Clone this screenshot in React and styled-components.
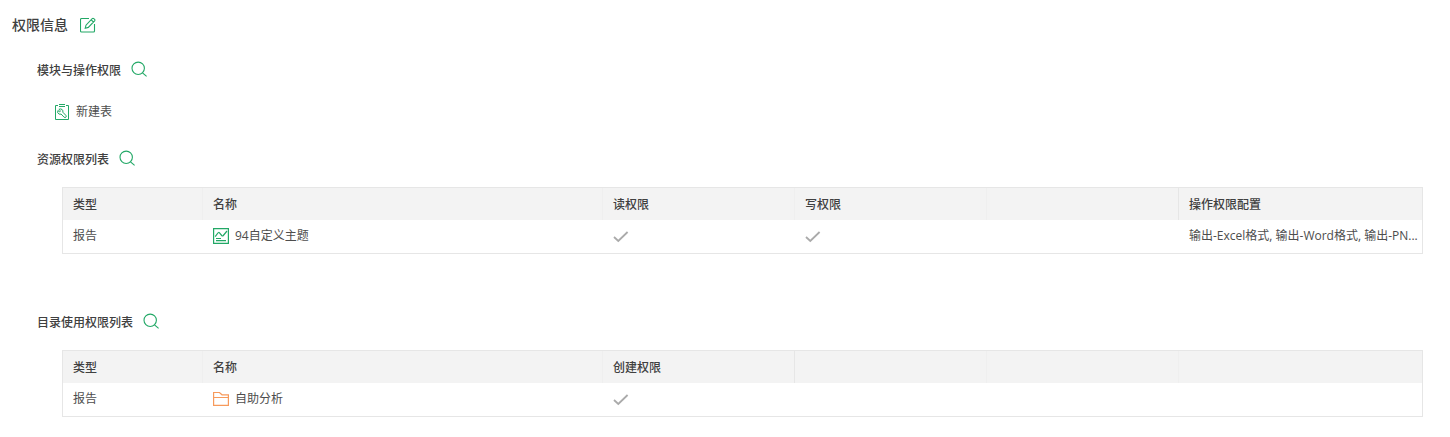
import React from "react";
import styled, { createGlobalStyle } from "styled-components";

const GlobalStyle = createGlobalStyle`
  * { box-sizing: border-box; }
  body {
    margin: 0;
    background: #fff;
    color: #4d4d4d;
    font: 12px/22px "Open Sans", "Noto Sans CJK SC", sans-serif;
  }
`;

const Page = styled.main`
  padding: 14px 27px 20px 12px;
`;

const Heading = styled.div`
  display: flex;
  align-items: center;
  height: 22px;
  gap: ${(p) => (p.$main ? "12px" : "10px")};
`;

const PageTitle = styled.h1`
  margin: 0;
  font-size: 14px;
  font-weight: 500;
  color: #404040;
`;

const SectionTitle = styled.h2`
  margin: 0;
  padding-top: 2px;
  font-size: 12px;
  font-weight: 500;
  color: #404040;
`;

const Section = styled.section`
  margin-top: ${(p) => p.$gap}px;
  padding-left: 25px;
`;

const IconButton = styled.button`
  display: flex;
  width: 16px;
  height: 16px;
  margin-bottom: ${(p) => (p.$raised ? "2px" : "0")};
  padding: 0;
  border: 0;
  background: none;
  cursor: pointer;
`;

const Modules = styled.ul`
  margin: 20px 0 0;
  padding: 0 0 0 18px;
  list-style: none;
`;

const IconLabel = styled.span`
  display: flex;
  align-items: center;
  gap: 6px;
`;

const Table = styled.table`
  width: calc(100% - 25px);
  margin: 17px 0 0 25px;
  table-layout: fixed;
  border: 1px solid #e6e6e6;
  border-collapse: separate;
  border-spacing: 0;
`;

const Column = styled.col`
  width: ${(p) => p.$width};
`;

const HeadCell = styled.th`
  height: 32px;
  padding: 2px 10px 0;
  background: #f3f3f3;
  border-left: 1px solid ${(p) => (p.$strong ? "#e6e6e6" : "#efefef")};
  color: #404040;
  font-weight: 500;
  text-align: left;
  &:first-child { border-left: 0; }
`;

const Cell = styled.td`
  height: 33px;
  padding: 0 0 2px 10px;
  white-space: nowrap;
  overflow: hidden;
  & + & { padding-left: 11px; }
`;

const Svg = styled.svg`
  display: block;
  flex: none;
  fill: none;
  stroke: ${(p) => p.$color || "#22a866"};
  stroke-width: ${(p) => p.$weight || 1};
`;

const EditIcon = () => (
  <Svg width="16" height="16" viewBox="0 0 16 16" aria-hidden="true" $weight={1.1}>
    <path d="M9 1.5H1.5Q.5 1.5.5 2.5V14Q.5 15 1.5 15H13.5Q14.5 15 14.5 14V7" />
    <path d="M5.2 11.3 6 8.2 12.2 1.7Q13 1 13.8 1.7L14.6 2.4Q15.3 3.1 14.6 3.9L8.3 10.4ZM11.2 2.8 13.5 5" />
  </Svg>
);

const SearchIcon = () => (
  <Svg width="16" height="16" viewBox="0 0 16 16" aria-hidden="true" $weight={1.1}>
    <circle cx="7.2" cy="7.3" r="6.2" />
    <path d="M11.5 11.8 15.6 15.4" />
  </Svg>
);

const ToolClipboardIcon = () => (
  <Svg width="15" height="16" viewBox="0 0 15 16" aria-hidden="true">
    <path d="M3 1.5H.5V15.5H13.5V1.5H11" />
    <path d="M4 .5H10M4 2.5H10" />
    <path d="M3.9 5.3 5.5 6.8 4.6 7.9 2.9 6.5Q1.9 9 3.9 10Q5 10.5 6 10L9.1 13.2Q10.2 14 11 13.1Q11.7 12.2 10.8 11.3L7.8 8.2Q8.3 6.7 7.2 5.6Q5.9 4.4 3.9 5.3Z" />
  </Svg>
);

const ReportIcon = () => (
  <Svg width="16" height="16" viewBox="0 0 16 16" aria-hidden="true" $weight={1.2}>
    <path d="M.6.6H15.4V15.4H.6Z" />
    <path d="M2.2 8.7 4.9 5Q5.7 4 6.5 4.9L8.7 7.5Q9.5 8.4 10.3 7.5L14 3M3 10.5H8M3 12.6H13" />
  </Svg>
);

const FolderIcon = () => (
  <Svg width="16" height="16" viewBox="0 0 16 16" aria-hidden="true" $color="#f79a5c" $weight={1.2}>
    <path d="M.6 1.5H6.5L9 3.8H15.4V14.4H.6ZM.6 6.5H15.4" />
  </Svg>
);

const CheckIcon = () => (
  <Svg width="16" height="16" viewBox="0 0 16 16" role="img" aria-label="是" $color="#aaa" $weight={1.8}>
    <path d="M1 9 5.3 13 14.6 4" />
  </Svg>
);

const SectionHeading = ({ title }) => (
  <Heading>
    <SectionTitle>{title}</SectionTitle>
    <IconButton type="button" aria-label="搜索" $raised>
      <SearchIcon />
    </IconButton>
  </Heading>
);

const WIDTHS = ["139px", "auto", "192px", "192px", "192px", "244px"];

const PermissionTable = ({ heads, strong, icon, name, checks, actions }) => (
  <Table>
    <colgroup>
      {WIDTHS.map((width, i) => (
        <Column key={i} $width={width} />
      ))}
    </colgroup>
    <thead>
      <tr>
        {heads.map((head, i) => (
          <HeadCell key={i} scope="col" $strong={strong.includes(i)}>
            {head}
          </HeadCell>
        ))}
      </tr>
    </thead>
    <tbody>
      <tr>
        <Cell>报告</Cell>
        <Cell>
          <IconLabel>
            {icon}
            {name}
          </IconLabel>
        </Cell>
        {checks.map((checked, i) => (
          <Cell key={i}>{checked && <CheckIcon />}</Cell>
        ))}
        <Cell>{actions}</Cell>
      </tr>
    </tbody>
  </Table>
);

export default function App() {
  return (
    <>
      <GlobalStyle />
      <Page>
        <Heading $main>
          <PageTitle>权限信息</PageTitle>
          <IconButton type="button" aria-label="编辑">
            <EditIcon />
          </IconButton>
        </Heading>
        <Section $gap={23}>
          <SectionHeading title="模块与操作权限" />
          <Modules>
            <li>
              <IconLabel>
                <ToolClipboardIcon />
                新建表
              </IconLabel>
            </li>
          </Modules>
        </Section>
        <Section $gap={25}>
          <SectionHeading title="资源权限列表" />
          <PermissionTable
            heads={["类型", "名称", "读权限", "写权限", "", "操作权限配置"]}
            strong={[5]}
            icon={<ReportIcon />}
            name="94自定义主题"
            checks={[true, true, false]}
            actions="输出-Excel格式, 输出-Word格式, 输出-PN..."
          />
        </Section>
        <Section $gap={57}>
          <SectionHeading title="目录使用权限列表" />
          <PermissionTable
            heads={["类型", "名称", "创建权限", "", "", ""]}
            strong={[3]}
            icon={<FolderIcon />}
            name="自助分析"
            checks={[true, false, false]}
            actions=""
          />
        </Section>
      </Page>
    </>
  );
}
